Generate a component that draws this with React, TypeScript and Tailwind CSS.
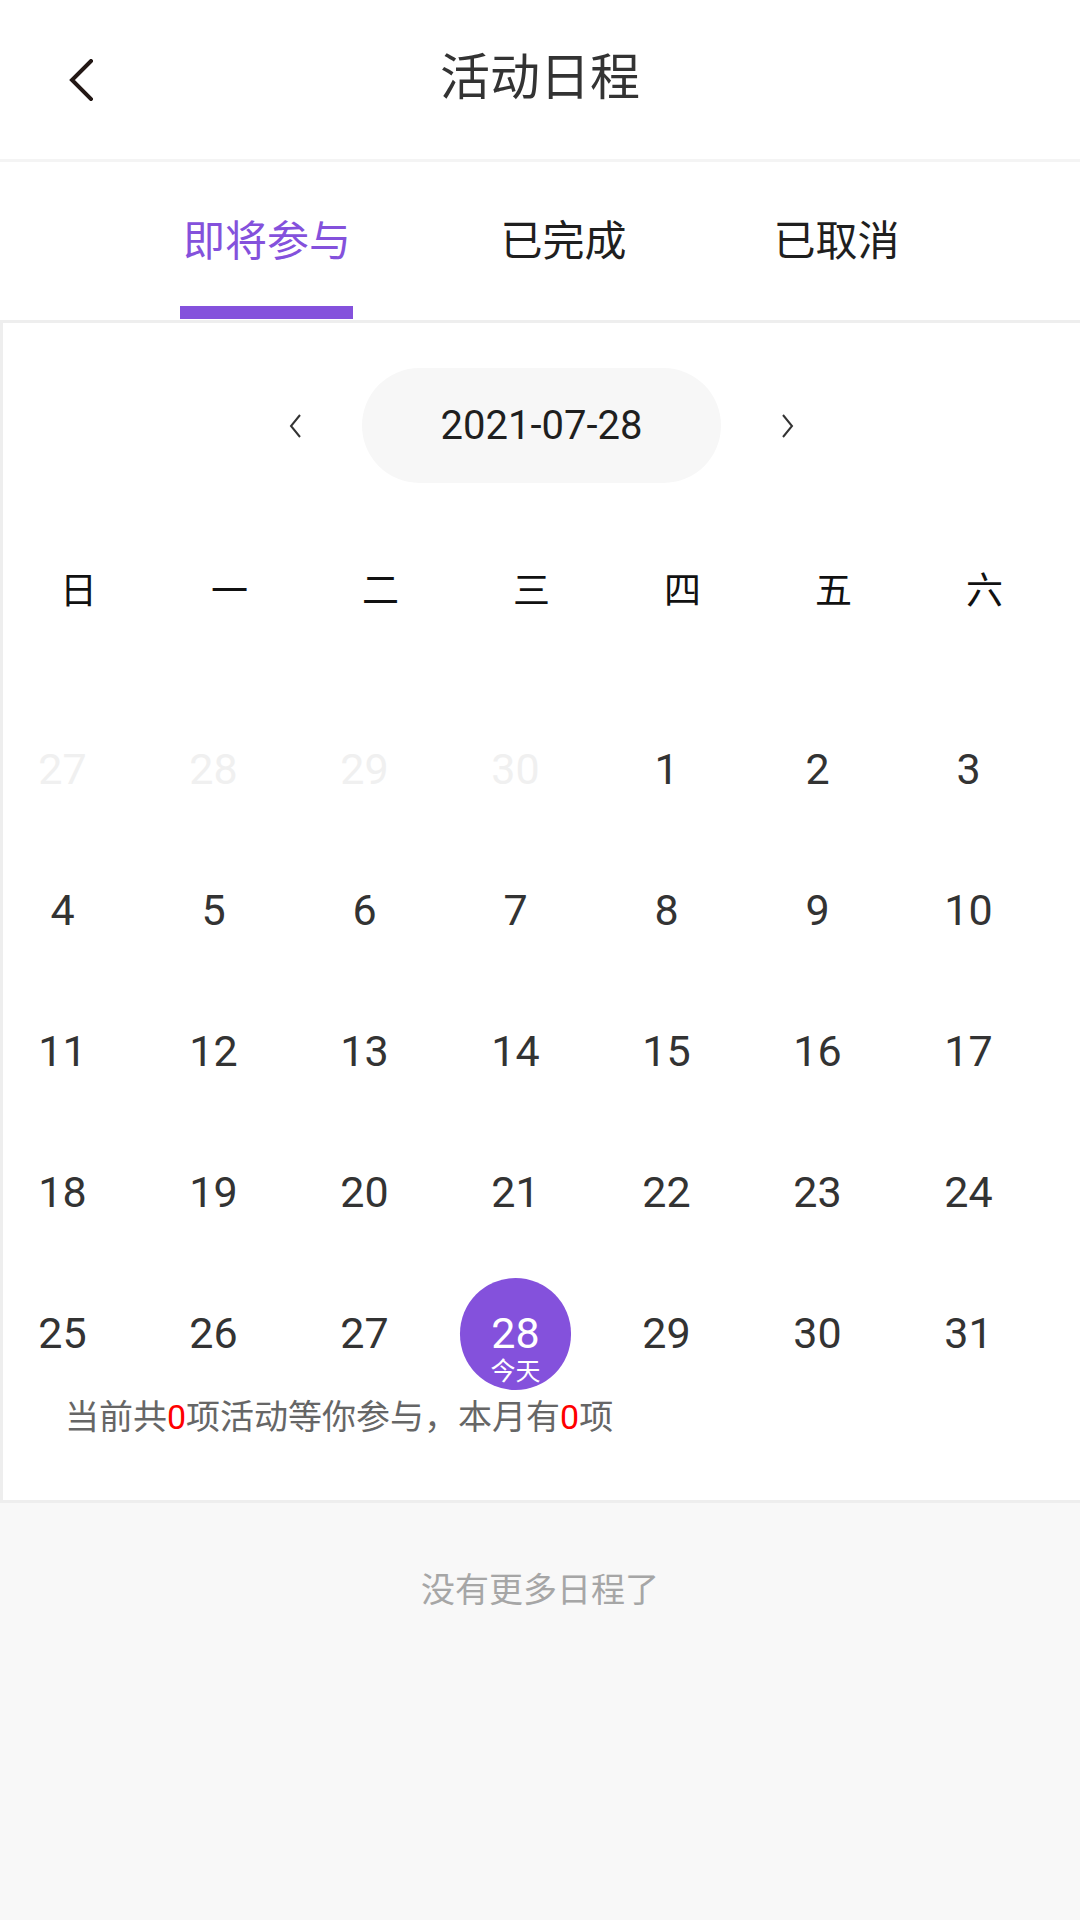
import React from "react";

const FONT = "font-['Roboto','Noto_Sans_CJK_SC',sans-serif]";

const weekdays = ["日", "一", "二", "三", "四", "五", "六"];

type Cell = { d: number; muted?: boolean; today?: boolean };

const cells: Cell[] = [
  { d: 27, muted: true },
  { d: 28, muted: true },
  { d: 29, muted: true },
  { d: 30, muted: true },
  ...Array.from({ length: 31 }, (_, i) => ({ d: i + 1, today: i + 1 === 28 })),
];

function BackIcon() {
  return (
    <svg width="24" height="42" viewBox="0 0 24 42" fill="none">
      <polyline points="22,2 3,21 22,40" stroke="#231815" strokeWidth="4" strokeLinecap="square" strokeLinejoin="miter" fill="none" />
    </svg>
  );
}

function SmallChevron({ dir }: { dir: "left" | "right" }) {
  return (
    <svg width="15" height="24" viewBox="0 0 15 24" fill="none">
      {dir === "left" ? (
        <polyline points="12,1 3,12 12,23" stroke="#333" strokeWidth="2" fill="none" />
      ) : (
        <polyline points="3,1 12,12 3,23" stroke="#333" strokeWidth="2" fill="none" />
      )}
    </svg>
  );
}

export default function App() {
  return (
    <div className={`${FONT} w-[1080px] min-h-[1920px] bg-[#f8f8f8] flex flex-col`}>
      {/* Header */}
      <div className="h-[159px] bg-white grid grid-cols-[1fr_auto_1fr] items-center">
        <div className="pl-[69px] flex items-center">
          <BackIcon />
        </div>
        <div className="text-[50px] leading-none text-[#333] -mt-[4px]">活动日程</div>
        <div />
      </div>

      {/* Tabs */}
      <div className="h-[164px] bg-white border-t-[3px] border-b-[3px] border-t-[#f4f4f4] border-b-[#eeeeee] flex justify-center gap-[147px]">
        {[
          { t: "即将参与", active: true },
          { t: "已完成" },
          { t: "已取消" },
        ].map((tab) => (
          <div key={tab.t} className="flex flex-col items-center pt-[59px]">
            <div className={`text-[42px] leading-[42px] whitespace-nowrap ${tab.active ? "text-[#8451dc]" : "text-[#1f1f1f]"}`}>{tab.t}</div>
            <div className={`mt-[43px] h-[13px] ${tab.active ? "w-[173px] bg-[#8451dc]" : "w-0 bg-transparent"}`} />
          </div>
        ))}
      </div>

      {/* Calendar card */}
      <div className="bg-white border-l-[3px] border-b-[3px] border-[#eeeeee] h-[1180px] flex flex-col">
        <div className="mt-[45px] flex items-center justify-center gap-[59px]">
          <SmallChevron dir="left" />
          <div className="w-[359px] h-[115px] rounded-full bg-[#f7f7f7] flex items-center justify-center text-[40px] text-[#1f1f1f] leading-none">
            2021-07-28
          </div>
          <SmallChevron dir="right" />
        </div>

        <div className="mt-[78px] grid grid-cols-7 w-[1057px] h-[60px] items-center">
          {weekdays.map((w) => (
            <div key={w} className="text-center text-[37px] leading-none text-[#111]">
              {w}
            </div>
          ))}
        </div>

        <div className="mt-[78px] grid grid-cols-7 w-[1057px] auto-rows-[141px]">
          {cells.map((c, i) => (
            <div key={i} className="flex items-center justify-center pr-[32px]">
              {c.today ? (
                <div className="relative w-[111px] h-[112px] rounded-full bg-[#8451dc] flex items-center justify-center">
                  <span className="text-[43px] leading-none text-white">{c.d}</span>
                  <span className="absolute left-0 right-0 bottom-[6px] text-center text-[25px] leading-none text-white">今天</span>
                </div>
              ) : (
                <span className={`text-[43px] leading-none ${c.muted ? "text-[#f0f0f0]" : "text-[#333]"}`}>{c.d}</span>
              )}
            </div>
          ))}
        </div>

        <div className="-mt-[4px] pl-[62px] text-[34px] leading-[34px] text-[#666]">
          当前共<span className="text-[#ff0000]">0</span>项活动等你参与，本月有<span className="text-[#ff0000]">0</span>项
        </div>
      </div>

      {/* Footer */}
      <div className="pt-[70px] text-center text-[34px] leading-[34px] text-[#a6a6a6]">没有更多日程了</div>
    </div>
  );
}
